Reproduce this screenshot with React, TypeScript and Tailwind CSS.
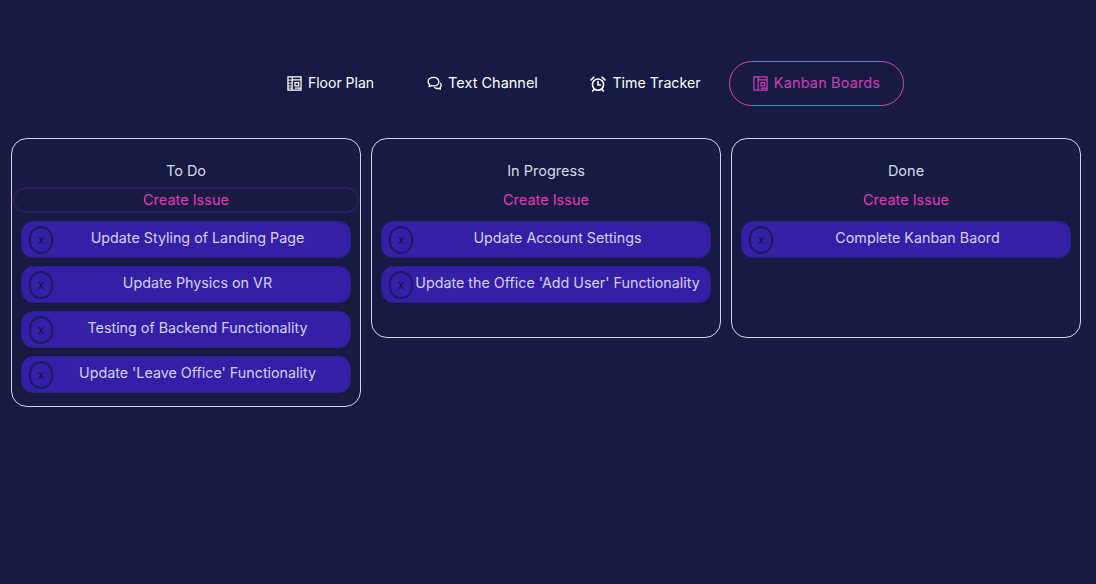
import React from 'react'

type Column = {
  title: string
  issues: string[]
}

const columns: Column[] = [
  {
    title: 'To Do',
    issues: [
      'Update Styling of Landing Page',
      'Update Physics on VR',
      'Testing of Backend Functionality',
      "Update 'Leave Office' Functionality",
    ],
  },
  {
    title: 'In Progress',
    issues: ['Update Account Settings', "Update the Office 'Add User' Functionality"],
  },
  {
    title: 'Done',
    issues: ['Complete Kanban Baord'],
  },
]

function PlanIcon({ hatched }: { hatched?: boolean }) {
  return (
    <svg width="15" height="15" viewBox="0 0 16 16" fill="none" stroke="currentColor" strokeWidth="1.3">
      <path d="M1 1h14v14H1z" />
      <path d="M5.500 1v14M5.500 4.200H15M8.500 7h4v3.500h-4zM8.500 13h6.500" />
      {hatched && <path d="M1 4.500h4.500M1 7.500h4.500M1 10.500h4.500M1 13h4.500" strokeOpacity="0.7" />}
    </svg>
  )
}

function ChatIcon() {
  return (
    <svg width="15" height="15" viewBox="0 0 16 16" fill="none" stroke="currentColor" strokeWidth="1.4" strokeLinejoin="round">
      <path d="M7 1.500c-3.200 0-5.800 1.900-5.800 4.500 0 1.300.6 2.400 1.600 3.200l-.6 2.100 2.500-1.100c.7.200 1.500.3 2.300.3 3.200 0 5.600-1.900 5.600-4.500S10.200 1.500 7 1.500z" />
      <path d="M14 7.500c1 .8 1.300 2 1 3.100-.2.700-.6 1.200-1 1.600l.3 1.800-2.100-.9c-1.500.4-3.200.1-4.400-1" />
    </svg>
  )
}

function AlarmIcon() {
  return (
    <svg width="16" height="16" viewBox="0 0 16 16" fill="none" stroke="currentColor" strokeWidth="1.6" strokeLinecap="round">
      <circle cx="8" cy="8.600" r="5.600" />
      <path d="M8 5.600v3.400h2.500M1 4l2.800-2.800M15 4l-2.800-2.800M4 13.400l-1.400 1.600M12 13.400l1.400 1.600" />
    </svg>
  )
}

function NavItem({
  icon,
  label,
  width,
  active,
}: {
  icon: React.ReactNode
  label: string
  width: string
  active?: boolean
}) {
  return (
    <a
      href="#"
      className={`flex h-[45px] items-center justify-center gap-[6px] rounded-full border ${width} ${
        active ? 'border-[#cf44bd] text-[#cf3fb8]' : 'border-transparent text-white'
      }`}
    >
      {icon}
      <span className="pb-[2px]">{label}</span>
    </a>
  )
}

function IssueCard({ text }: { text: string }) {
  return (
    <div className="flex h-[37px] items-center rounded-[12px] border border-[#2c2080] bg-[#341fa6] pl-[7px] pr-[8px]">
      <button className="flex h-[28px] w-[24px] shrink-0 items-center justify-center rounded-[12px] border-2 border-[#1e1a63] text-xs leading-none text-[#14123f]">
        x
      </button>
      <span className="flex-1 whitespace-nowrap pb-[3px] text-center text-[14.3px] text-[#d6d0f5]">{text}</span>
    </div>
  )
}

function BoardColumn({ column, focused }: { column: Column; focused: boolean }) {
  return (
    <section className="min-h-[200px] w-[350px] rounded-[16px] border border-[#d5d5e3] px-[1px] pb-[13px] pt-[22px]">
      <h2 className="h-[20px] text-center leading-[20px] text-[#d9d9e4]">{column.title}</h2>
      <button
        className={`mt-[6px] block h-[26px] w-full rounded-full border-2 text-[#e23db4] ${
          focused ? 'border-[#2f1d5a]' : 'border-transparent'
        }`}
      >
        Create Issue
      </button>
      <div className="mt-[8px] flex flex-col gap-[8px] px-[8px]">
        {column.issues.map((issue) => (
          <IssueCard text={issue} key={issue} />
        ))}
      </div>
    </section>
  )
}

export default function App() {
  return (
    <div
      className="h-[584px] overflow-hidden bg-[#171a42] text-[14.5px]"
      style={{ fontFamily: '"Inter", "Liberation Sans", sans-serif' }}
    >
      <nav className="flex justify-end gap-[5px] pr-[192px] pt-[61px]">
        <NavItem icon={<PlanIcon hatched />} label="Floor Plan" width="w-[135px] text-[14px]" />
        <NavItem icon={<ChatIcon />} label="Text Channel" width="w-[159px]" />
        <NavItem icon={<AlarmIcon />} label="Time Tracker" width="w-[157px] text-[14.2px]" />
        <NavItem icon={<PlanIcon />} label="Kanban Boards" width="w-[175px] tracking-[0.01em]" active />
      </nav>
      <main className="mt-[32px] flex items-start gap-[10px] pl-[11px]">
        {columns.map((column, i) => (
          <BoardColumn column={column} focused={i === 0} key={column.title} />
        ))}
      </main>
    </div>
  )
}
